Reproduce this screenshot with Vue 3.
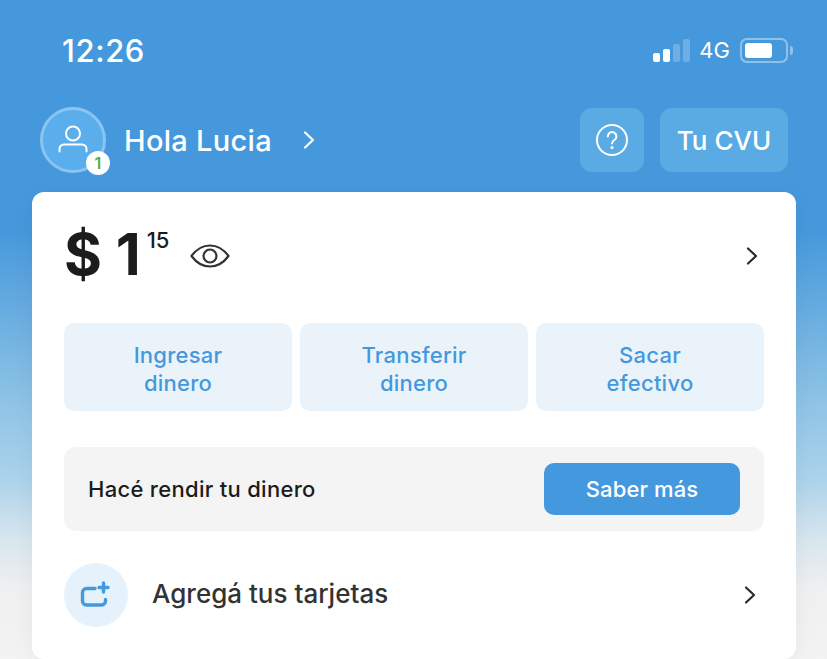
<template>
  <div class="screen">
    <div class="status">
      <span class="time">12:26</span>
      <div class="status-right">
        <div class="signal">
          <i class="on s1"></i><i class="on s2"></i><i class="s3"></i><i class="s4"></i>
        </div>
        <span class="net">4G</span>
        <div class="battery"><div class="battery-fill"></div></div>
        <div class="battery-tip"></div>
      </div>
    </div>

    <div class="header">
      <div class="avatar">
        <svg width="34" height="34" viewBox="0 0 34 34" fill="none" stroke="#fff" stroke-width="2" stroke-linecap="round">
          <circle cx="17" cy="10.5" r="7" />
          <path d="M3.500 28.500v-2.500a4.500 4.500 0 0 1 4.500-4.500h18a4.500 4.500 0 0 1 4.500 4.500v2.500" />
        </svg>
        <span class="badge">1</span>
      </div>
      <span class="hello">Hola Lucia</span>
      <svg class="hello-chevron" width="14" height="20" viewBox="0 0 14 20" fill="none" stroke="#fff" stroke-width="2.200" stroke-linecap="round" stroke-linejoin="round">
        <path d="M3 2.500l8 7.500-8 7.500" />
      </svg>
      <div class="header-actions">
        <div class="tile tile--help">
          <svg width="34" height="34" viewBox="0 0 34 34" fill="none" stroke="#fff" stroke-width="2" stroke-linecap="round">
            <circle cx="17" cy="17" r="15" />
            <path d="M12.800 13.400a4.300 4.300 0 1 1 6.600 3.600c-1.500 1-2.400 1.800-2.400 3.400" />
            <circle cx="17" cy="24.600" r="0.600" fill="#fff" />
          </svg>
        </div>
        <div class="tile tile--cvu">Tu CVU</div>
      </div>
    </div>

    <div class="card">
      <div class="balance">
        <span class="amount">$ 1</span>
        <span class="cents">15</span>
        <svg class="eye" width="40" height="24" viewBox="0 0 40 24" fill="none" stroke="#333" stroke-width="2.200" stroke-linejoin="round">
          <path d="M1.500 12C7 4.500 13 1.500 20 1.500S33 4.500 38.500 12C33 19.500 27 22.500 20 22.500S7 19.500 1.500 12Z" />
          <circle cx="20" cy="12" r="6.500" />
        </svg>
        <svg class="chevron" width="14" height="20" viewBox="0 0 14 20" fill="none" stroke="#2b2b2b" stroke-width="2.200" stroke-linecap="round" stroke-linejoin="round">
          <path d="M3 2.500l8 7.500-8 7.500" />
        </svg>
      </div>

      <div class="actions">
        <div v-for="a in actions" :key="a" class="action">{{ a }}</div>
      </div>

      <div class="promo">
        <span class="promo-text">Hacé rendir tu dinero</span>
        <div class="promo-btn">Saber más</div>
      </div>

      <div class="row">
        <div class="row-icon">
          <svg width="34" height="30" viewBox="0 0 34 30" fill="none" stroke="#4499de" stroke-width="3.400" stroke-linecap="round">
            <path d="M16 8.500H7.500a4 4 0 0 0-4 4v8.500a4 4 0 0 0 4 4h15a4 4 0 0 0 4-4v-1.500" />
            <path d="M24.500 3v9M20 7.500h9" />
          </svg>
        </div>
        <span class="row-text">Agregá tus tarjetas</span>
        <svg class="chevron" width="14" height="20" viewBox="0 0 14 20" fill="none" stroke="#2b2b2b" stroke-width="2.200" stroke-linecap="round" stroke-linejoin="round">
          <path d="M3 2.500l8 7.500-8 7.500" />
        </svg>
      </div>
    </div>
  </div>
</template>

<script setup>
const actions = ['Ingresar\ndinero', 'Transferir\ndinero', 'Sacar\nefectivo']
</script>

<style>
html, body { margin: 0; background: #f2f2f2; }
</style>

<style scoped>
.screen {
  width: 827px;
  height: 659px;
  overflow: hidden;
  box-sizing: border-box;
  font-family: Inter, "Liberation Sans", sans-serif;
  background: linear-gradient(180deg, #4698dc 0, #4698dc 230px, #8dc3e5 400px, #acd3ea 480px, #d8e6ee 540px, #f0f0f0 590px, #f3f3f3 659px);
}

.status {
  display: flex;
  align-items: center;
  justify-content: space-between;
  height: 36px;
  padding: 32px 34px 0 62px;
  color: #fff;
}
.time { font-size: 31px; font-weight: 500; letter-spacing: 0.600px; }
.status-right { display: flex; align-items: center; }
.signal { display: flex; align-items: flex-end; gap: 3px; height: 24px; margin-right: 9px; }
.signal i { width: 7px; border-radius: 2px; background: rgba(255, 255, 255, 0.22); }
.signal .on { background: #fff; }
.s1 { height: 9px; }
.s2 { height: 13px; }
.s3 { height: 18px; }
.s4 { height: 23px; }
.net { font-size: 22px; font-weight: 400; margin-right: 10px; }
.battery {
  box-sizing: border-box;
  width: 48px;
  height: 25px;
  padding: 3px;
  border: 2px solid rgba(255, 255, 255, 0.4);
  border-radius: 7px;
}
.battery-fill { width: 27px; height: 100%; background: #fff; border-radius: 3px; }
.battery-tip {
  width: 3px;
  height: 9px;
  margin-left: 2px;
  background: rgba(255, 255, 255, 0.4);
  border-radius: 0 3px 3px 0;
}

.header {
  display: flex;
  align-items: center;
  height: 64px;
  margin-top: 40px;
  padding: 0 39px 0 40px;
  color: #fff;
}
.avatar {
  position: relative;
  box-sizing: border-box;
  display: flex;
  align-items: center;
  justify-content: center;
  width: 66px;
  height: 66px;
  border: 3px solid #8ac4f2;
  border-radius: 50%;
  background: #5aaeec;
}
.badge {
  position: absolute;
  right: -7px;
  bottom: -5px;
  width: 24px;
  height: 24px;
  border-radius: 50%;
  background: #fff;
  color: #4caf50;
  font-size: 16px;
  font-weight: 600;
  line-height: 24px;
  text-align: center;
}
.hello { margin-left: 18px; font-size: 29px; font-weight: 500; letter-spacing: 0.300px; }
.hello-chevron { margin-left: 30px; }
.header-actions { display: flex; gap: 16px; margin-left: auto; }
.tile {
  display: flex;
  align-items: center;
  justify-content: center;
  height: 64px;
  border-radius: 12px;
  background: #5aaae4;
}
.tile--help { width: 64px; }
.tile--cvu { width: 128px; font-size: 26px; font-weight: 500; }

.card {
  box-sizing: border-box;
  height: 467px;
  margin: 20px 31px 0 32px;
  padding: 0 32px;
  background: #fff;
  border-radius: 12px;
  box-shadow: 0 4px 24px rgba(0, 0, 0, 0.05);
  color: #1c1c1c;
}

.balance {
  display: flex;
  align-items: flex-start;
  height: 131px;
}
.amount { margin-top: 21px; font-size: 58px; font-weight: 700; line-height: 82px; }
.cents { margin: 33px 0 0 6px; font-size: 22px; font-weight: 500; line-height: 30px; }
.eye { margin: 52px 0 0 21px; }
.chevron { margin-left: auto; margin-right: 7px; flex-shrink: 0; }
.balance .chevron { margin-top: 54px; margin-right: 5px; }

.actions { display: grid; grid-template-columns: repeat(3, 1fr); gap: 8px; }
.action {
  display: flex;
  align-items: center;
  justify-content: center;
  height: 88px;
  padding-top: 3px;
  box-sizing: border-box;
  border-radius: 10px;
  background: #ebf3fa;
  color: #4499de;
  font-size: 22px;
  font-weight: 500;
  letter-spacing: 0.250px;
  line-height: 28px;
  text-align: center;
  white-space: pre-line;
}

.promo {
  display: flex;
  align-items: center;
  justify-content: space-between;
  height: 84px;
  margin-top: 36px;
  padding: 0 24px;
  border-radius: 12px;
  background: #f4f4f4;
}
.promo-text { font-size: 22px; font-weight: 500; letter-spacing: 0.300px; }
.promo-btn {
  display: flex;
  align-items: center;
  justify-content: center;
  width: 196px;
  height: 52px;
  border-radius: 10px;
  background: #4499de;
  color: #fff;
  font-size: 22px;
  font-weight: 500;
  letter-spacing: 0.100px;
}

.row { display: flex; align-items: center; height: 64px; margin-top: 32px; }
.row-icon {
  display: flex;
  align-items: center;
  justify-content: center;
  width: 64px;
  height: 64px;
  border-radius: 50%;
  background: #e6f2fb;
}
.row-text { margin: 0 0 3px 24px; font-size: 26px; font-weight: 500; color: #333; }
</style>
